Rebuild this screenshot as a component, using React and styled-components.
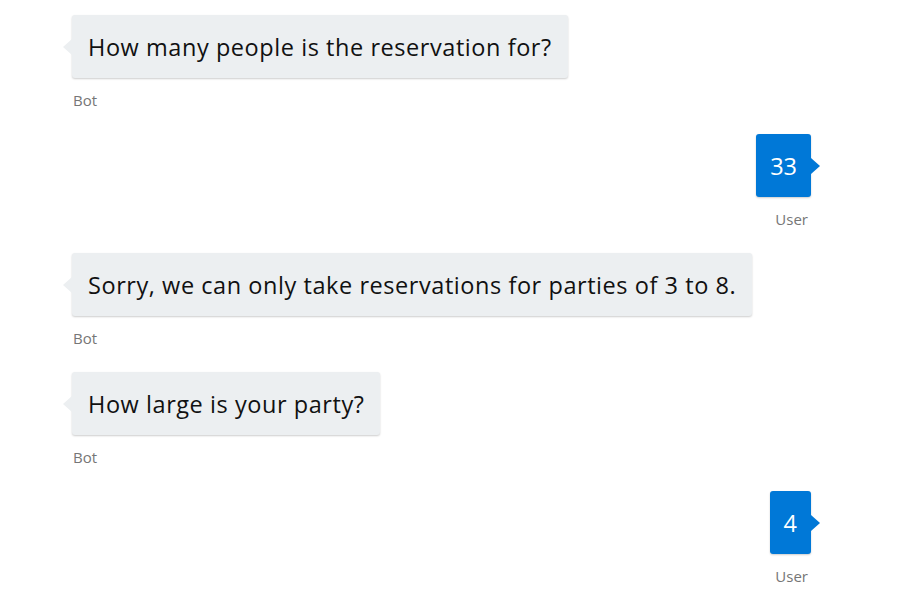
import React from "react";
import styled, { createGlobalStyle } from "styled-components";

const Global = createGlobalStyle`
  html, body { margin: 0; padding: 0; background: #ffffff; }
  body { font-family: "Open Sans", "Noto Sans", "Liberation Sans", sans-serif; }
`;

const Chat = styled.div`
  display: flex;
  flex-direction: column;
  padding: 15px 95px 0 72px;
  width: 906px;
  box-sizing: border-box;
`;

const Message = styled.div`
  display: flex;
  flex-direction: column;
  align-items: ${(p) => (p.$user ? "flex-end" : "flex-start")};
  height: 119px;
`;

const Bubble = styled.div`
  position: relative;
  display: flex;
  align-items: center;
  height: 63px;
  box-sizing: border-box;
  padding: 0 ${(p) => (p.$user ? "14px" : "16px")};
  border-radius: 3px;
  background: ${(p) => (p.$user ? "#0078d7" : "#eceff1")};
  color: ${(p) => (p.$user ? "#ffffff" : "#111111")};
  box-shadow: 0 1px 2px rgba(0, 0, 0, 0.2);
  font-size: 23.5px;
  letter-spacing: ${(p) => (p.$user ? "0" : "0.56px")};
  white-space: nowrap;

  &::before {
    content: "";
    position: absolute;
    top: 24px;
    ${(p) => (p.$user ? "right: -9px;" : "left: -9px;")}
    width: 0;
    height: 0;
    border-top: 8px solid transparent;
    border-bottom: 8px solid transparent;
    ${(p) =>
      p.$user
        ? "border-left: 9px solid #0078d7;"
        : "border-right: 9px solid #eceff1;"}
  }
`;

const Label = styled.div`
  margin-top: 12px;
  font-size: 15px;
  line-height: 20px;
  color: #767676;
  padding-left: ${(p) => (p.$user ? "0" : "1px")};
  padding-right: ${(p) => (p.$user ? "3px" : "0")};
`;

const messages = [
  { from: "bot", text: "How many people is the reservation for?" },
  { from: "user", text: "33" },
  { from: "bot", text: "Sorry, we can only take reservations for parties of 3 to 8." },
  { from: "bot", text: "How large is your party?" },
  { from: "user", text: "4" },
];

export default function App() {
  return (
    <>
      <Global />
      <Chat>
        {messages.map((m, i) => {
          const user = m.from === "user";
          return (
            <Message key={i} $user={user}>
              <Bubble $user={user}>{m.text}</Bubble>
              <Label $user={user}>{user ? "User" : "Bot"}</Label>
            </Message>
          );
        })}
      </Chat>
    </>
  );
}
